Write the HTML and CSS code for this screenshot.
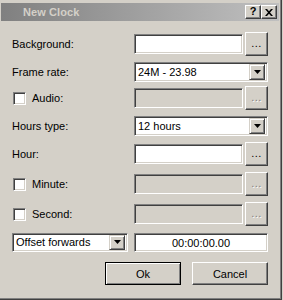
FILE: index.html
```html
<!DOCTYPE html>
<html>
<head>
<meta charset="utf-8">
<link rel="stylesheet" href="styles.css">
</head>
<body>
<div class="window">
  <div class="titlebar">
    <span class="title">New Clock</span>
    <div class="tbtns">
      <span class="tbtn help">?</span>
      <span class="tbtn"><svg width="8" height="7" viewBox="0 0 8 7"><path d="M0 0h2l2 2.3L6 0h2L5 3.5 8 7H6L4 4.7 2 7H0l3-3.5z" fill="#000"/></svg></span>
    </div>
  </div>
  <div class="form">
    <div class="lbl">Background:</div>
    <div class="pair"><div class="input"></div><div class="btn dots">...</div></div>

    <div class="lbl">Frame rate:</div>
    <div class="select"><span class="val">24M - 23.98</span><span class="arrow"><svg width="7" height="4" viewBox="0 0 7 4"><path d="M0 0h7L3.5 4z" fill="#000"/></svg></span></div>

    <div class="lbl"><span class="check"></span>Audio:</div>
    <div class="pair"><div class="input off"></div><div class="btn dots off">...</div></div>

    <div class="lbl">Hours type:</div>
    <div class="select"><span class="val">12 hours</span><span class="arrow"><svg width="7" height="4" viewBox="0 0 7 4"><path d="M0 0h7L3.5 4z" fill="#000"/></svg></span></div>

    <div class="lbl">Hour:</div>
    <div class="pair"><div class="input"></div><div class="btn dots">...</div></div>

    <div class="lbl"><span class="check"></span>Minute:</div>
    <div class="pair"><div class="input off"></div><div class="btn dots off">...</div></div>

    <div class="lbl"><span class="check"></span>Second:</div>
    <div class="pair"><div class="input off"></div><div class="btn dots off">...</div></div>

    <div class="select offset"><span class="val">Offset forwards</span><span class="arrow"><svg width="7" height="4" viewBox="0 0 7 4"><path d="M0 0h7L3.5 4z" fill="#000"/></svg></span></div>
    <div class="input time">00:00:00.00</div>
  </div>
  <div class="actions">
    <div class="btn push default">Ok</div>
    <div class="btn push">Cancel</div>
  </div>
</div>
</body>
</html>
```

FILE: styles.css
```css
* { box-sizing: border-box; }
html, body { margin: 0; padding: 0; background: #d4d0c8; }
body { font-family: "Liberation Sans", Arial, sans-serif; font-size: 11px; color: #000; }

.window {
  width: 282px;
  height: 300px;
  background: #d4d0c8;
  border-right: 1px solid #404040;
  border-bottom: 1px solid #404040;
  box-shadow: inset -1px -1px 0 #808080;
  padding-top: 3px;
  overflow: hidden;
}

.titlebar {
  margin: 0 2px 0 1px;
  height: 18px;
  background: linear-gradient(to right, #808080, #c0c0c0);
  display: flex;
  align-items: center;
  padding-left: 22px;
  padding-right: 2px;
}
.title { font-weight: bold; color: #d4d0c8; font-size: 11px; flex: 1; letter-spacing: 0.1px; }
.tbtns { display: flex; }
.tbtn {
  width: 16px; height: 14px;
  display: flex; align-items: center; justify-content: center;
  background: #d4d0c8;
  border: 1px solid; border-color: #fff #404040 #404040 #fff;
  box-shadow: inset -1px -1px 0 #808080;
  font-weight: bold; font-size: 11px; line-height: 1;
}
.tbtn.help { padding-bottom: 1px; }

.form {
  margin-top: 10px;
  padding-left: 12px;
  display: grid;
  grid-template-columns: 122px 134px;
  grid-template-rows: 26px 29px 24px 31px 25px 36px 24px 32px;
  align-items: center;
}
.lbl { display: flex; align-items: center; height: 14px; }

.check {
  width: 13px; height: 13px;
  margin: 0 6px 0 1px;
  background: #fff;
  border: 1px solid; border-color: #808080 #fff #fff #808080;
  box-shadow: inset 1px 1px 0 #404040, inset -1px -1px 0 #d4d0c8;
}

.pair { display: flex; align-items: center; gap: 2px; }

.input {
  width: 109px; height: 20px;
  background: #fff;
  border: 1px solid; border-color: #808080 #fff #fff #808080;
  box-shadow: inset 1px 1px 0 #404040, inset -1px -1px 0 #d4d0c8;
}
.input.off { background: #d4d0c8; }
.input.time {
  width: 134px; height: 19px;
  display: flex; align-items: center; justify-content: center;
  padding-top: 1px;
}

.btn {
  background: #d4d0c8;
  border: 1px solid; border-color: #fff #404040 #404040 #fff;
  box-shadow: inset -1px -1px 0 #808080;
  display: flex; align-items: center; justify-content: center;
}
.dots {
  width: 23px; height: 24px;
  align-items: flex-end;
  padding-bottom: 6px;
  font-size: 11px; line-height: 11px; letter-spacing: 0.5px;
}
.dots.off { color: #808080; text-shadow: 1px 1px 0 #fff; }

.select {
  width: 134px; height: 20px;
  background: #fff;
  border: 1px solid; border-color: #808080 #fff #fff #808080;
  box-shadow: inset 1px 1px 0 #404040, inset -1px -1px 0 #d4d0c8;
  display: flex; align-items: center;
  padding: 2px 2px 2px 2px;
}
.select .val { flex: 1; padding-left: 1px; }
.select .arrow {
  width: 16px; height: 16px;
  background: #d4d0c8;
  border: 1px solid; border-color: #d4d0c8 #404040 #404040 #d4d0c8;
  box-shadow: inset 1px 1px 0 #fff, inset -1px -1px 0 #808080;
  display: flex; align-items: center; justify-content: center;
}
.select.offset { width: 116px; height: 19px; padding: 2px; }
.select.offset .arrow { height: 15px; }

.actions {
  margin-top: 4px;
  display: flex; justify-content: flex-end;
  gap: 11px;
  padding-right: 13px;
}
.push { width: 76px; height: 23px; }
.push.default {
  border: 1px solid #000;
  box-shadow: inset 1px 1px 0 #fff, inset -1px -1px 0 #808080;
}
```
